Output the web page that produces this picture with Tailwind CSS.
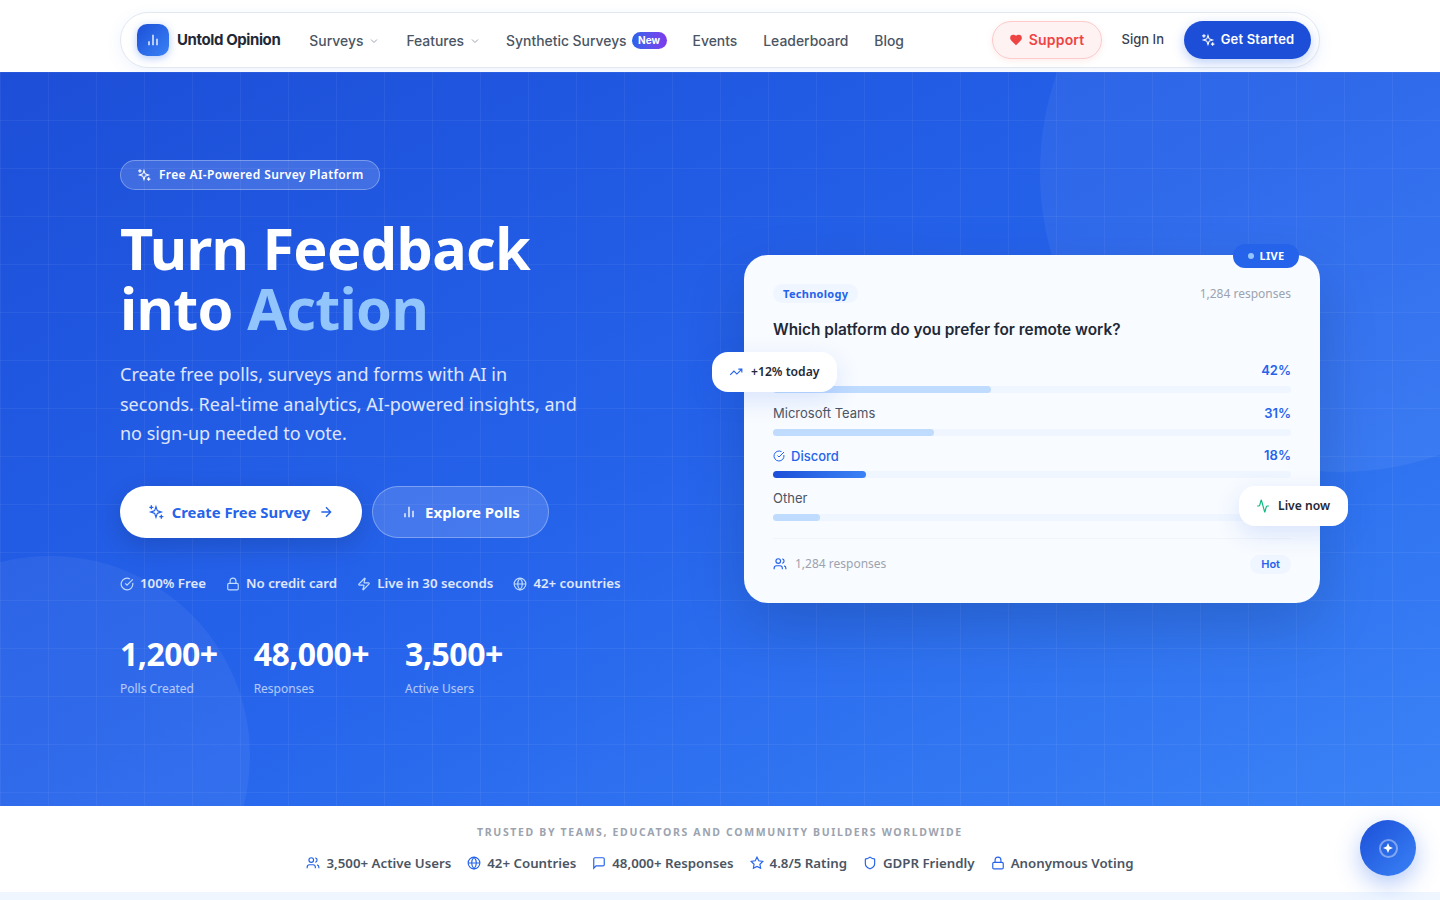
<!DOCTYPE html>
<html lang="en">
<head>
<meta charset="UTF-8">
<meta name="viewport" content="width=device-width, initial-scale=1.0">
<title>Untold Opinion</title>
<script src="https://cdn.jsdelivr.net/npm/@tailwindcss/browser@4"></script>
</head>
<body class="bg-[#eff6ff] font-['Noto_Sans',sans-serif] h-[900px] overflow-hidden">
<svg class="hidden">
  <symbol id="i-sparkles" viewBox="0 0 24 24"><path transform="translate(1.4 1.4) scale(.88)" d="m12 3-1.912 5.813a2 2 0 0 1-1.275 1.275L3 12l5.813 1.912a2 2 0 0 1 1.275 1.275L12 21l1.912-5.813a2 2 0 0 1 1.275-1.275L21 12l-5.813-1.912a2 2 0 0 1-1.275-1.275L12 3Z"/><path d="M5 2v6M2 5h6M20 16v6M17 19h6"/></symbol>
  <symbol id="i-bars" viewBox="0 0 24 24"><path d="M18 20V10M12 20V4M6 20v-6"/></symbol>
  <symbol id="i-check" viewBox="0 0 24 24"><path d="M21.801 10A10 10 0 1 1 17 3.335"/><path d="m9 11 3 3L22 4"/></symbol>
  <symbol id="i-lock" viewBox="0 0 24 24"><rect x="3" y="11" width="18" height="11" rx="2"/><path d="M7 11V7a5 5 0 0 1 10 0v4"/></symbol>
  <symbol id="i-zap" viewBox="0 0 24 24"><path d="M4 14a1 1 0 0 1-.78-1.63l9.9-10.2a.5.5 0 0 1 .86.46l-1.92 6.02A1 1 0 0 0 13 10h7a1 1 0 0 1 .78 1.63l-9.9 10.2a.5.5 0 0 1-.86-.46l1.92-6.02A1 1 0 0 0 11 14z"/></symbol>
  <symbol id="i-globe" viewBox="0 0 24 24"><circle cx="12" cy="12" r="10"/><path d="M12 2a14.5 14.5 0 0 0 0 20 14.5 14.5 0 0 0 0-20M2 12h20"/></symbol>
  <symbol id="i-users" viewBox="0 0 24 24"><path d="M16 21v-2a4 4 0 0 0-4-4H6a4 4 0 0 0-4 4v2"/><circle cx="9" cy="7" r="4"/><path d="M22 21v-2a4 4 0 0 0-3-3.87M16 3.13a4 4 0 0 1 0 7.75"/></symbol>
  <symbol id="i-message" viewBox="0 0 24 24"><path d="M21 15a2 2 0 0 1-2 2H7l-4 4V5a2 2 0 0 1 2-2h14a2 2 0 0 1 2 2z"/></symbol>
  <symbol id="i-star" viewBox="0 0 24 24"><path d="M12 2l3.09 6.26L22 9.27l-5 4.87 1.18 6.88L12 17.77l-6.18 3.25L7 14.14 2 9.27l6.91-1.01z"/></symbol>
  <symbol id="i-shield" viewBox="0 0 24 24"><path d="M20 13c0 5-3.5 7.5-7.66 8.95a1 1 0 0 1-.67-.01C7.5 20.5 4 18 4 13V6a1 1 0 0 1 1-1c2 0 4.5-1.2 6.24-2.72a1.17 1.17 0 0 1 1.52 0C14.51 3.81 17 5 19 5a1 1 0 0 1 1 1z"/></symbol>
  <symbol id="i-trend" viewBox="0 0 24 24"><path d="M22 7l-8.5 8.5-5-5L2 17M16 7h6v6"/></symbol>
  <symbol id="i-activity" viewBox="0 0 24 24"><path d="M22 12h-2.48a2 2 0 0 0-1.93 1.46l-2.35 8.36a.25.25 0 0 1-.48 0L9.24 2.18a.25.25 0 0 0-.48 0l-2.35 8.36A2 2 0 0 1 4.49 12H2"/></symbol>
  <symbol id="i-arrow" viewBox="0 0 24 24"><path d="M5 12h14M12 5l7 7-7 7"/></symbol>
  <symbol id="i-chevron" viewBox="0 0 24 24"><path d="m6 9 6 6 6-6"/></symbol>
</svg>

<!-- Navbar -->
<header class="h-[72px] bg-white px-[120px] pt-3 font-['Inter',sans-serif]">
  <nav class="h-14 rounded-full bg-white border border-[#e2e8f0] shadow-[0_4px_16px_rgba(37,99,235,0.08)] flex items-center pl-4 pr-2">
    <div class="w-8 h-8 rounded-[10px] bg-gradient-to-br from-[#1d4ed8] to-[#3b82f6] shadow-[0_2px_8px_rgba(37,99,235,0.35)] flex items-center justify-center text-white">
      <svg class="w-4 h-4 fill-none stroke-current stroke-2"><use href="#i-bars"/></svg>
    </div>
    <span class="ml-2 text-[15px] font-bold text-[#1f2937] tracking-[-0.4px]">Untold Opinion</span>
    <div class="flex items-center ml-[29px] text-[13.9px] font-medium text-[#4b5563] pt-0.5">
      <span>Surveys</span>
      <svg class="w-3 h-3 ml-[5px] fill-none stroke-[#9ca3af] stroke-2"><use href="#i-chevron"/></svg>
      <span class="ml-[26px]">Features</span>
      <svg class="w-3 h-3 ml-[5px] fill-none stroke-[#9ca3af] stroke-2"><use href="#i-chevron"/></svg>
      <span class="ml-[25px]">Synthetic Surveys</span>
      <span class="ml-[5px] px-[6.5px] h-[17px] leading-[17px] rounded-full bg-gradient-to-r from-[#2563eb] to-[#7c3aed] text-white text-[10px] font-bold">New</span>
      <span class="ml-[26px]">Events</span>
      <span class="ml-[26px]">Leaderboard</span>
      <span class="ml-[26px]">Blog</span>
    </div>
    <div class="ml-auto flex items-center">
      <div class="h-[38px] w-[110px] rounded-full bg-[#fef2f2] border border-[#fecaca] shadow-[0_2px_6px_rgba(239,68,68,0.1)] flex items-center justify-center gap-1.5 text-sm font-semibold tracking-[0.2px] text-[#ef4444]">
        <svg class="w-3.5 h-3.5 fill-current" viewBox="0 0 24 24"><path d="M19 14c1.49-1.46 3-3.21 3-5.5A5.5 5.5 0 0 0 16.5 3c-1.76 0-3 .5-4.5 2-1.5-1.5-2.74-2-4.5-2A5.5 5.5 0 0 0 2 8.5c0 2.3 1.5 4.05 3 5.5l7 7Z"/></svg>
        <span>Support</span>
      </div>
      <span class="ml-5 text-[13px] font-medium text-[#374151]">Sign In</span>
      <div class="ml-5 h-[38px] w-[127px] rounded-full bg-[#1d4ed8] shadow-[0_4px_12px_rgba(37,99,235,0.3)] flex items-center justify-center gap-1.5 text-[13px] font-semibold tracking-[0.2px] text-white">
        <svg class="w-3.5 h-3.5 fill-none stroke-current stroke-2"><use href="#i-sparkles"/></svg>
        <span>Get Started</span>
      </div>
    </div>
  </nav>
</header>

<!-- Hero -->
<section class="relative h-[734px] overflow-hidden bg-gradient-to-br from-[#1d4ed8] via-[#2563eb] to-[#3b82f6]">
  <div class="absolute inset-0 bg-[linear-gradient(rgba(255,255,255,0.05)_1px,transparent_1px),linear-gradient(90deg,rgba(255,255,255,0.05)_1px,transparent_1px)] bg-[size:48px_48px]"></div>
  <div class="absolute w-[600px] h-[600px] rounded-full bg-white/5 -top-[200px] -right-[200px]"></div>
  <div class="absolute w-[400px] h-[400px] rounded-full bg-white/5 -bottom-[150px] -left-[150px]"></div>

  <div class="relative px-[120px] flex justify-between">
    <div class="pt-[88px] w-[520px]">
      <div class="inline-flex items-center gap-2 h-[30px] w-[260px] pl-[16px] rounded-full bg-white/15 border border-white/30 text-xs font-semibold tracking-[0.38px] text-white">
        <svg class="w-3.5 h-3.5 fill-none stroke-current stroke-2"><use href="#i-sparkles"/></svg>
        <span>Free AI-Powered Survey Platform</span>
      </div>
      <h1 class="mt-[28px] text-[57.6px] leading-[60px] font-bold text-white tracking-[-0.7px]">Turn Feedback<br>into <span class="text-[#93c5fd]">Action</span></h1>
      <p class="mt-[22px] w-[460px] text-[18px] leading-[29.5px] text-white/85">Create free polls, surveys and forms with AI in seconds. Real-time analytics, AI-powered insights, and no sign-up needed to vote.</p>
      <div class="mt-[37.5px] flex gap-2.5">
        <div class="h-[52px] w-[242px] rounded-full bg-white shadow-[0_8px_24px_rgba(0,0,0,0.15)] flex items-center justify-center text-[14.8px] font-bold text-[#2563eb]">
          <svg class="w-4 h-4 fill-none stroke-current stroke-2"><use href="#i-sparkles"/></svg>
          <span class="ml-2">Create Free Survey</span>
          <svg class="w-4 h-4 ml-2 fill-none stroke-current stroke-2"><use href="#i-arrow"/></svg>
        </div>
        <div class="h-[52px] w-[177px] rounded-full bg-white/15 border border-white/30 flex items-center justify-center text-[15px] font-bold text-white">
          <svg class="w-4 h-4 fill-none stroke-current stroke-2"><use href="#i-bars"/></svg>
          <span class="ml-2">Explore Polls</span>
        </div>
      </div>
      <div class="mt-[36px] flex gap-5 text-[13.28px] font-semibold text-white/85 whitespace-nowrap">
        <div class="flex items-center gap-1.5"><svg class="w-3.5 h-3.5 fill-none stroke-[#bfdbfe] stroke-2"><use href="#i-check"/></svg>100% Free</div>
        <div class="flex items-center gap-1.5"><svg class="w-3.5 h-3.5 fill-none stroke-[#bfdbfe] stroke-2"><use href="#i-lock"/></svg>No credit card</div>
        <div class="flex items-center gap-1.5"><svg class="w-3.5 h-3.5 fill-none stroke-[#bfdbfe] stroke-2"><use href="#i-zap"/></svg>Live in 30 seconds</div>
        <div class="flex items-center gap-1.5"><svg class="w-3.5 h-3.5 fill-none stroke-[#bfdbfe] stroke-2"><use href="#i-globe"/></svg>42+ countries</div>
      </div>
      <div class="mt-[40px] flex gap-9">
        <div><div class="text-[32px] leading-[40px] font-bold text-white tracking-[-0.5px]">1,200+</div><div class="mt-[7px] text-xs text-white/65">Polls Created</div></div>
        <div><div class="text-[32px] leading-[40px] font-bold text-white tracking-[-0.5px]">48,000+</div><div class="mt-[7px] text-xs text-white/65">Responses</div></div>
        <div><div class="text-[32px] leading-[40px] font-bold text-white tracking-[-0.5px]">3,500+</div><div class="mt-[7px] text-xs text-white/65">Active Users</div></div>
      </div>
    </div>

    <!-- Poll card -->
    <div class="relative mt-[183px] w-[576px] h-[348px] self-start rounded-3xl bg-[#f8fbff] shadow-[0_24px_60px_rgba(0,0,0,0.15)] p-[29px]">
      <div class="absolute -top-[11px] right-[21px] h-6 w-[66px] rounded-full bg-[#2563eb] flex items-center justify-center gap-1.5 text-[11px] font-bold tracking-[0.3px] text-white">
        <span class="w-1.5 h-1.5 rounded-full bg-[#93c5fd]"></span>LIVE
      </div>
      <div class="absolute top-[97px] -left-8 h-10 w-[125px] rounded-2xl bg-white shadow-[0_8px_24px_rgba(37,99,235,0.15)] flex items-center gap-2 pl-[17px] text-[12.16px] font-semibold text-[#1f2937]">
        <svg class="w-3.5 h-3.5 fill-none stroke-[#2563eb] stroke-2"><use href="#i-trend"/></svg>+12% today
      </div>
      <div class="absolute top-[231px] -right-7 h-10 w-[109px] rounded-2xl bg-white shadow-[0_8px_24px_rgba(37,99,235,0.15)] flex items-center gap-2 pl-[17px] text-[12.16px] font-semibold text-[#1f2937]">
        <svg class="w-3.5 h-3.5 fill-none stroke-[#10b981] stroke-2"><use href="#i-activity"/></svg>Live now
      </div>

      <div class="flex items-center justify-between">
        <span class="h-[19px] leading-[19px] px-2.5 rounded-full bg-[#eff6ff] text-[11px] font-bold tracking-[0.3px] text-[#2563eb]">Technology</span>
        <span class="text-xs text-[#9ca3af]">1,284 responses</span>
      </div>
      <h3 class="mt-[16px] font-['Inter',sans-serif] text-[15.36px] leading-[22px] font-semibold text-[#1f2937]">Which platform do you prefer for remote work?</h3>

      <div class="mt-[19px] font-['Inter',sans-serif] text-[13px]">
        <div class="h-[42.5px]">
          <div class="flex justify-between h-[21px] leading-[20px]"><span></span><span class="font-semibold text-[#2563eb]">42%</span></div>
          <div class="mt-[5px] h-[7px] rounded bg-[#eff6ff]"><div class="h-full rounded bg-[#bfdbfe]" style="width:42%"></div></div>
        </div>
        <div class="h-[42.5px]">
          <div class="flex justify-between h-[21px] leading-[20px]"><span class="text-[#4b5563]">Microsoft Teams</span><span class="font-semibold text-[#2563eb]">31%</span></div>
          <div class="mt-[5px] h-[7px] rounded bg-[#eff6ff]"><div class="h-full rounded bg-[#bfdbfe]" style="width:31%"></div></div>
        </div>
        <div class="h-[42.5px]">
          <div class="flex justify-between h-[21px] leading-[20px]"><span class="flex items-center gap-1.5 font-medium text-[#2563eb]"><svg class="w-3 h-3 fill-none stroke-current stroke-2"><use href="#i-check"/></svg>Discord</span><span class="font-semibold text-[#2563eb]">18%</span></div>
          <div class="mt-[5px] h-[7px] rounded bg-[#eff6ff]"><div class="h-full rounded bg-gradient-to-r from-[#1d4ed8] to-[#3b82f6]" style="width:18%"></div></div>
        </div>
        <div class="h-[42.5px]">
          <div class="h-[21px] leading-[20px]"><span class="text-[#4b5563]">Other</span></div>
          <div class="mt-[5px] h-[7px] rounded bg-[#eff6ff]"><div class="h-full rounded bg-[#bfdbfe]" style="width:9%"></div></div>
        </div>
      </div>

      <div class="mt-[8px] border-t border-[#f1f5f9] pt-4 flex items-center justify-between text-xs">
        <span class="flex items-center gap-2 pb-0.5 text-[#9ca3af]"><svg class="w-3.5 h-3.5 fill-none stroke-[#2563eb] stroke-2"><use href="#i-users"/></svg>1,284 responses</span>
        <span class="h-[19px] leading-[19px] px-[11px] rounded-full bg-[#eff6ff] font-['Inter',sans-serif] text-[11px] font-semibold text-[#2563eb]">Hot</span>
      </div>
    </div>
  </div>
</section>

<!-- Trusted by -->
<section class="h-[86px] bg-white pt-[18px] flex flex-col items-center">
  <p class="text-[10.5px] leading-4 font-bold tracking-[1.64px] text-[#9ca3af]">TRUSTED BY TEAMS, EDUCATORS AND COMMUNITY BUILDERS WORLDWIDE</p>
  <div class="mt-[13px] flex gap-4 text-[13.28px] leading-5 font-semibold text-[#4b5563]">
    <div class="flex items-center gap-1.5"><svg class="w-3.5 h-3.5 fill-none stroke-[#2563eb] stroke-2"><use href="#i-users"/></svg>3,500+ Active Users</div>
    <div class="flex items-center gap-1.5"><svg class="w-3.5 h-3.5 fill-none stroke-[#2563eb] stroke-2"><use href="#i-globe"/></svg>42+ Countries</div>
    <div class="flex items-center gap-1.5"><svg class="w-3.5 h-3.5 fill-none stroke-[#2563eb] stroke-2"><use href="#i-message"/></svg>48,000+ Responses</div>
    <div class="flex items-center gap-1.5"><svg class="w-3.5 h-3.5 fill-none stroke-[#2563eb] stroke-2"><use href="#i-star"/></svg>4.8/5 Rating</div>
    <div class="flex items-center gap-1.5"><svg class="w-3.5 h-3.5 fill-none stroke-[#2563eb] stroke-2"><use href="#i-shield"/></svg>GDPR Friendly</div>
    <div class="flex items-center gap-1.5"><svg class="w-3.5 h-3.5 fill-none stroke-[#2563eb] stroke-2"><use href="#i-lock"/></svg>Anonymous Voting</div>
  </div>
</section>

<!-- Floating assistant button -->
<div class="fixed left-[1360px] top-[820px] w-14 h-14 rounded-full bg-gradient-to-br from-[#1d4ed8] to-[#3b82f6] shadow-[0_8px_24px_rgba(37,99,235,0.35)] flex items-center justify-center">
  <div class="w-[19px] h-[19px] rounded-full border-2 border-white/40 flex items-center justify-center">
    <svg class="w-2.5 h-2.5 fill-white" viewBox="0 0 24 24"><path d="M12 0l3.5 8.5L24 12l-8.5 3.5L12 24l-3.5-8.5L0 12l8.5-3.5z"/></svg>
  </div>
</div>
</body>
</html>
